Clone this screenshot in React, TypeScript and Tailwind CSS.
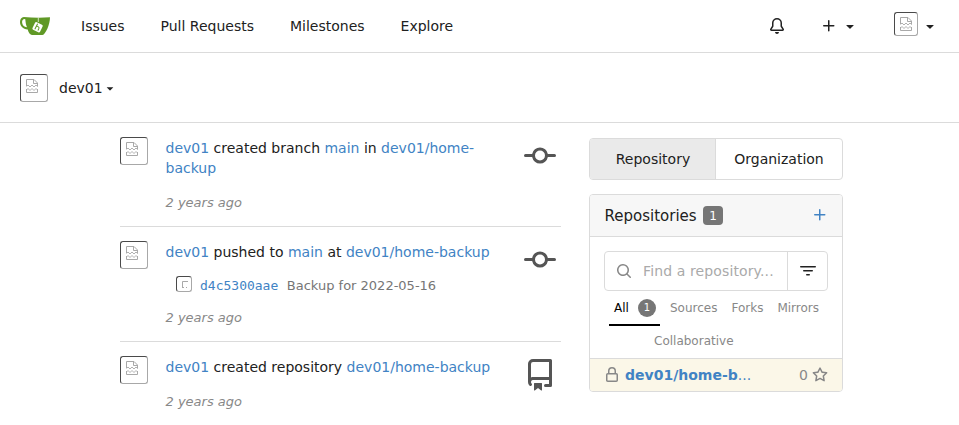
import React from "react";

const paths = {
  down: "M4.427 7.427l3.396 3.396a.25.25 0 00.354 0l3.396-3.396A.25.25 0 0011.396 7H4.604a.25.25 0 00-.177.427z",
  bell: "M8 16a2 2 0 001.985-1.75c.017-.137-.097-.25-.235-.25h-3.5c-.138 0-.252.113-.235.25A2 2 0 008 16z M8 1.5A3.5 3.5 0 004.5 5v2.947c0 .346-.102.683-.294.97l-1.703 2.556a.018.018 0 00-.003.01l.001.006c0 .002.002.004.004.006a.017.017 0 00.006.004l.007.001h10.964l.007-.001a.016.016 0 00.006-.004.016.016 0 00.004-.006l.001-.007a.017.017 0 00-.003-.01l-1.703-2.554a1.75 1.75 0 01-.294-.97V5A3.5 3.5 0 008 1.5zM3 5a5 5 0 0110 0v2.947c0 .05.015.098.042.139l1.703 2.555A1.518 1.518 0 0113.482 13H2.518a1.518 1.518 0 01-1.263-2.36l1.703-2.554A.25.25 0 003 7.947V5z",
  plus: "M7.75 2a.75.75 0 01.75.75V7h4.25a.75.75 0 110 1.5H8.5v4.25a.75.75 0 11-1.5 0V8.5H2.75a.75.75 0 010-1.5H7V2.75A.75.75 0 017.75 2z",
  commit: "M10.5 7.75a2.5 2.5 0 11-5 0 2.5 2.5 0 015 0zm1.43.75a4.002 4.002 0 01-7.86 0H.75a.75.75 0 110-1.5h3.32a4.001 4.001 0 017.86 0h3.32a.75.75 0 110 1.5h-3.32z",
  repo: "M2 2.5A2.5 2.5 0 014.5 0h8.75a.75.75 0 01.75.75v12.5a.75.75 0 01-.75.75h-2.5a.75.75 0 110-1.5h1.75v-2h-8a1 1 0 00-.714 1.7.75.75 0 01-1.072 1.05A2.495 2.495 0 012 11.5v-9zm10.5-1V9h-8c-.356 0-.694.074-1 .208V2.5a1 1 0 011-1h8zM5 12.25v3.25a.25.25 0 00.4.2l1.45-1.087a.25.25 0 01.3 0L8.6 15.7a.25.25 0 00.4-.2v-3.25a.25.25 0 00-.25-.25h-3.5a.25.25 0 00-.25.25z",
  search: "M11.5 7a4.499 4.499 0 11-8.998 0A4.499 4.499 0 0111.5 7zm-.82 4.74a6 6 0 111.06-1.06l3.04 3.04a.75.75 0 11-1.06 1.06l-3.04-3.04z",
  filter: "M.75 3a.75.75 0 000 1.5h14.5a.75.75 0 000-1.5H.75zM3 7.75A.75.75 0 013.75 7h8.5a.75.75 0 010 1.5h-8.5A.75.75 0 013 7.75zm3 4a.75.75 0 01.75-.75h2.5a.75.75 0 010 1.5h-2.5a.75.75 0 01-.75-.75z",
  lock: "M4 4v2h-.25A1.75 1.75 0 002 7.75v5.5c0 .966.784 1.75 1.75 1.75h8.5A1.75 1.75 0 0014 13.25v-5.5A1.75 1.75 0 0012.25 6H12V4a4 4 0 10-8 0zm6.5 2V4a2.5 2.5 0 10-5 0v2h5zM12 7.5h.25a.25.25 0 01.25.25v5.5a.25.25 0 01-.25.25h-8.5a.25.25 0 01-.25-.25v-5.5a.25.25 0 01.25-.25H12z",
  star: "M8 .25a.75.75 0 01.673.418l1.882 3.815 4.21.612a.75.75 0 01.416 1.279l-3.046 2.97.719 4.192a.75.75 0 01-1.088.791L8 12.347l-3.766 1.98a.75.75 0 01-1.088-.79l.72-4.194L.818 6.374a.75.75 0 01.416-1.28l4.21-.611L7.327.668A.75.75 0 018 .25zm0 2.445L6.615 5.5a.75.75 0 01-.564.41l-3.097.45 2.24 2.184a.75.75 0 01.216.664l-.528 3.084 2.769-1.456a.75.75 0 01.698 0l2.77 1.456-.53-3.084a.75.75 0 01.216-.664l2.24-2.183-3.096-.45a.75.75 0 01-.564-.41L8 2.694v.001z",
};

function Icon({ name, size = 16, className = "" }: { name: keyof typeof paths; size?: number; className?: string }) {
  return (
    <svg viewBox="0 0 16 16" width={size} height={size} fill="currentColor" fillRule="evenodd" className={`shrink-0 ${className}`}>
      <path d={paths[name]} />
    </svg>
  );
}

// Avatar whose image failed to load: inset frame with the torn page glyph.
function Avatar({ className, small = false }: { className: string; small?: boolean }) {
  return (
    <span className={`block shrink-0 overflow-hidden rounded-[3px] border border-t-[#4a4a4a] border-l-[#4a4a4a] border-r-[#a8a8a8] border-b-[#a8a8a8] ${className}`}>
      {small ? (
        <svg width="14" height="14" viewBox="0 0 14 14" fill="none" stroke="#a9a9a9">
          <path d="M11 4.500H5.500V11M5 10.500h2M9 10.500h1" />
        </svg>
      ) : (
        <svg width="18" height="20" viewBox="0 0 18 20" fill="none" stroke="#a9a9a9">
          <path d="M5.500 11V4.500H13L16.500 8V11.500M12.500 5V8.500H16M5.500 14V17.500H16.500V14" />
          <path d="M5.500 11.500L7 10l2 2 2-2 2 2 2-2 1.500 1.500M5.500 15L7 13.500l2 2 2-2 2 2 2-2 1.500 1.500" strokeWidth="0.9" />
        </svg>
      )}
    </span>
  );
}

function Logo() {
  return (
    <svg width="30" height="30" viewBox="0 0 30 30" className="shrink-0">
      <path fill="#609926" fillRule="evenodd" d="M3.800 6C1.500 6.200 0 8.200 0 11c0 4 2.800 7.100 7.700 7.500C8.500 21.500 10.300 24 12 24h10.500C25.500 23.500 30 13.500 30 6.200C21 7 12 6.700 3.800 6ZM4.200 8C2.600 8.600 2 9.700 2.100 11.500C2.300 14 3.900 15.900 7 16.200C5.700 13.500 5.600 11 5.300 8.200Z" />
      <path d="M18.300 6.400V11" stroke="#dcebcf" strokeWidth="0.9" />
      <rect x="13.400" y="12" width="8.400" height="8.400" rx="1.300" fill="#fff" transform="rotate(26 17.600 16.100)" />
      <g fill="none" stroke="#609926" strokeWidth="1" transform="rotate(26 17.600 16.100)">
        <path d="M16.100 13v6.300M16.100 15.500h1.700q1.600 0 1.600 1.400v2.200" />
      </g>
    </svg>
  );
}

function A({ children }: { children: React.ReactNode }) {
  return <a className="text-[#4183c4]">{children}</a>;
}

function Feed({ icon, className, timeClass, children, extra }: { icon: "commit" | "repo"; className: string; timeClass: string; children: React.ReactNode; extra?: React.ReactNode }) {
  return (
    <article className={`flex ${className}`}>
      <Avatar className="size-7" />
      <div className="ml-[17.500px] w-[341px] pt-px">
        <p className="w-[330px] leading-5">{children}</p>
        {extra}
        <p className={`text-[13px] leading-5 text-[#888] italic ${timeClass}`}>2 years ago</p>
      </div>
      <Icon name={icon} size={32} className="mt-[3px] mr-[5px] ml-auto text-[#555]" />
    </article>
  );
}

export default function App() {
  return (
    <div className="h-[425px] w-[959px] overflow-hidden bg-white font-['DejaVu_Sans',sans-serif] text-[14px] leading-5 text-[#212121]">
      <nav className="flex h-[53px] items-center border-b border-[#dbdbdb] pl-5">
        <Logo />
        <div className="ml-[31px] flex gap-9">
          <a>Issues</a>
          <a>Pull Requests</a>
          <a>Milestones</a>
          <a>Explore</a>
        </div>
        <div className="ml-auto flex items-center pr-[21px]">
          <Icon name="bell" />
          <Icon name="plus" className="ml-9" />
          <Icon name="down" className="ml-[5px]" />
          <Avatar className="-mt-1 ml-9 size-6" />
          <Icon name="down" className="ml-1" />
        </div>
      </nav>
      <header className="flex h-[70px] items-center border-b border-[#dbdbdb] pl-5">
        <Avatar className="size-7" />
        <span className="ml-[11px]">dev01</span>
        <Icon name="down" size={14} />
      </header>
      <main className="flex pl-[120px]">
        <section className="w-[441px] pt-[14px]">
          <Feed icon="commit" className="h-[90px] border-b border-[#dbdbdb]" timeClass="mt-[15px]">
            <A>dev01</A> created branch <A>main</A> in <A>dev01/home-backup</A>
          </Feed>
          <Feed
            icon="commit"
            className="h-[115px] border-b border-[#dbdbdb] pt-[14px]"
            timeClass="mt-3"
            extra={
              <div className="mt-[14px] ml-[10px] flex h-5 items-center text-[13px] text-[#767676]">
                <Avatar small className="-mt-1 size-4" />
                <span className="ml-[8.500px] font-['DejaVu_Sans_Mono',monospace] text-[#4183c4]">d4c5300aae</span>
                <span className="ml-[8.500px]">Backup for 2022-05-16</span>
              </div>
            }
          >
            <A>dev01</A> pushed to <A>main</A> at <A>dev01/home-backup</A>
          </Feed>
          <Feed icon="repo" className="h-[84px] pt-[14px]" timeClass="mt-[15px]">
            <A>dev01</A> created repository <A>dev01/home-backup</A>
          </Feed>
        </section>
        <aside className="ml-7 w-[254px] pt-[15px]">
          <div className="flex h-[42px] overflow-hidden rounded border border-[#dbdbdb] text-center leading-10">
            <div className="w-[126px] border-r border-[#dbdbdb] bg-[#eaeaea] pl-px">Repository</div>
            <div className="flex-1">Organization</div>
          </div>
          <div className="mt-[14px] overflow-hidden rounded border border-[#dbdbdb]">
            <div className="flex h-[42px] items-center border-b border-[#dbdbdb] bg-[#f7f7f7] pr-[14px] pl-[14.500px] text-[15px]">
              Repositories
              <span className="ml-[6.500px] flex h-[19px] w-5 items-center justify-center rounded-[4px] bg-[#767676] text-[12px] text-white">1</span>
              <Icon name="plus" className="-mt-px ml-auto text-[#4183c4]" />
            </div>
            <div className="px-[14px] pt-[14px]">
              <div className="flex h-10 rounded border border-[#dbdbdb]">
                <div className="flex w-[183px] items-center border-r border-[#dbdbdb] pl-[11px]">
                  <Icon name="search" className="text-[#888]" />
                  <span className="ml-[11px] tracking-[0.120px] text-[#aaa]">Find a repository...</span>
                </div>
                <div className="flex flex-1 items-center justify-center">
                  <Icon name="filter" />
                </div>
              </div>
            </div>
            <div className="flex h-[35px] pl-[19px] text-[12px] text-[#888]">
              <div className="flex w-[51px] items-center border-b-2 border-black pl-[5px] text-black">
                All
                <span className="ml-[9px] flex size-[18px] items-center justify-center rounded-full bg-[#767676] text-[10px] text-white">1</span>
              </div>
              <span className="ml-[10px] leading-[34px]">Sources</span>
              <span className="ml-[14px] leading-[34px]">Forks</span>
              <span className="ml-[14px] leading-[34px]">Mirrors</span>
            </div>
            <div className="h-8 pl-16 text-[12px] leading-[31px] text-[#888]">Collaborative</div>
            <div className="flex h-[33px] items-center border-t border-[#dbdbdb] bg-[#fbf7e8] pr-[14px] pl-[14px] text-[#888]">
              <Icon name="lock" />
              <span className="ml-[5px] font-bold text-[#4183c4]">dev01/home-b<span className="font-normal">...</span></span>
              <span className="ml-auto">0</span>
              <Icon name="star" className="ml-1" />
            </div>
          </div>
        </aside>
      </main>
    </div>
  );
}
